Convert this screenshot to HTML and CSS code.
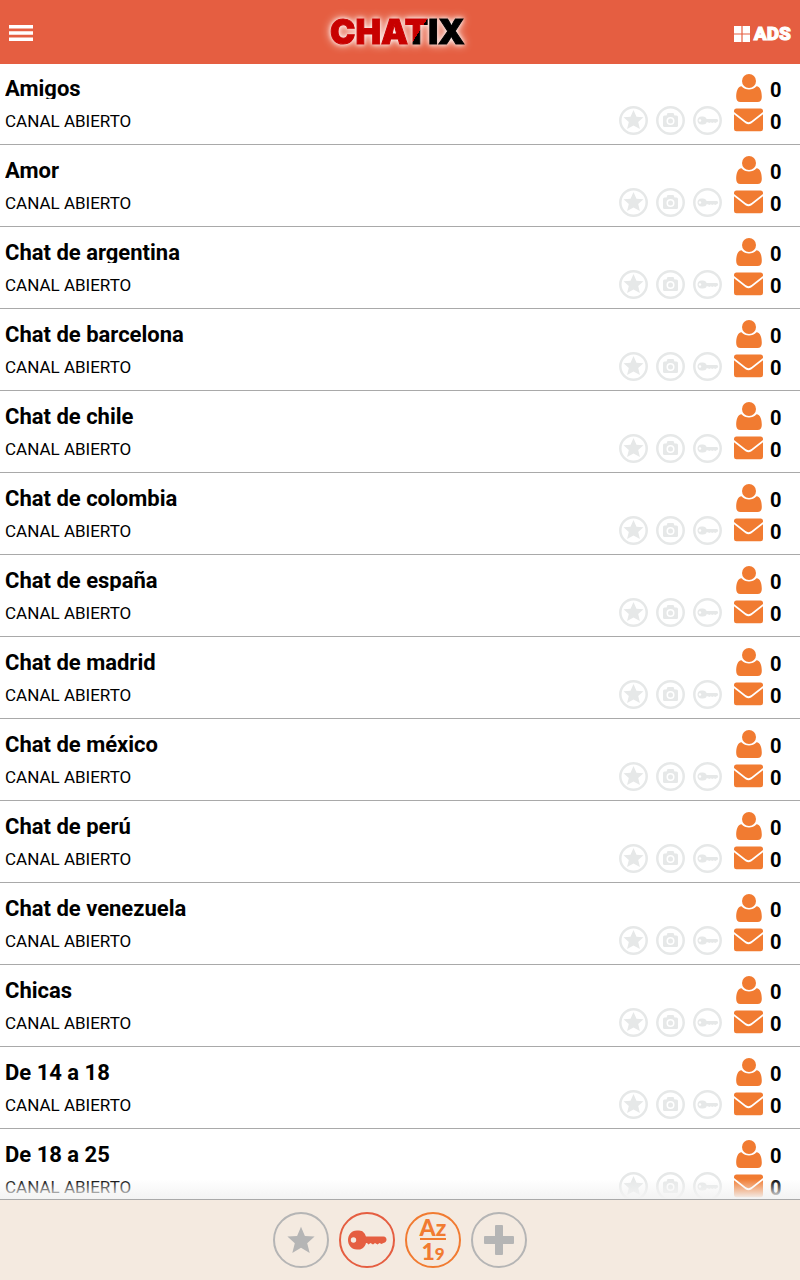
FILE: index.html
```
<!DOCTYPE html>
<html lang="es">
<head>
<meta charset="utf-8">
<meta name="viewport" content="width=device-width, initial-scale=1">
<title>Chatix</title>
<link rel="stylesheet" href="styles.css">
</head>
<body>
<svg class="sprite" aria-hidden="true">
  <symbol id="star" viewBox="0 0 28 28"><path d="M14 .8l3.900 9.200 9.700.6-7.400 6.600 2.500 9.800L14 21.800l-8.700 5.200 2.500-9.800L.4 10.600l9.700-.6z"/></symbol>
  <symbol id="key" viewBox="0 0 40 20"><path fill-rule="evenodd" d="M10 .5h2c4 0 6 3 7 6h17.500c4 0 4 6 0 6.500l-2 1-2-1-2 1.600-2.500-1.600-2 1.600-2.500-1.600-2 1.600L20 13h-1c-1 4-4 6.500-7 6.500h-2c-6 0-9-5-9-9.500S4 .5 10 .5zM6.500 7.300a2.700 2.700 0 1 0 0 5.400 2.700 2.700 0 1 0 0-5.400z"/></symbol>
  <symbol id="b-star" viewBox="0 0 30 30"><circle class="ring" cx="15.500" cy="15.500" r="13.200"/><path d="M15.500 5l3 6.700 7 .5-5.300 4.800 1.700 7-6.400-3.600L9.100 24l1.700-7-5.300-4.800 7-.5z"/></symbol>
  <symbol id="b-cam" viewBox="0 0 30 30"><circle class="ring" cx="15.500" cy="15.500" r="13.200"/><path fill-rule="evenodd" d="M9.500 10.500h2l1-2.500h6l1 2.500h2q1.500 0 1.500 1.500v8.500q0 1.500-1.500 1.500h-12Q8 22 8 20.500V12q0-1.500 1.500-1.500zM15.500 12a4 4 0 1 0 0 8 4 4 0 1 0 0-8z"/><circle cx="15.500" cy="16" r="2.500"/></symbol>
  <symbol id="b-key" viewBox="0 0 30 30"><circle class="ring" cx="15.500" cy="15.500" r="13.200"/><path fill-rule="evenodd" d="M9.500 11.500h1.500c2 0 3 1 3.600 2.500h10c2 0 2 3 0 3.200l-1.300.8-1.500-.8-1.500.9-1.500-.9-1.500.9-1.500-.9h-1.200C14.100 18.500 13 19.500 11 19.500H9.500c-2.700 0-4-2-4-4s1.300-4 4-4zM8 14.200a1.300 1.300 0 1 0 0 2.600 1.300 1.300 0 1 0 0-2.600z"/></symbol>
  <symbol id="user" viewBox="0 0 30 30"><circle cx="15" cy="8" r="7"/><path d="M7.500 13.200c4 4.300 11 4.300 15 0 3.800.5 5.300 5 5.300 10.800q0 5-4.300 5h-17q-4.300 0-4.300-5c0-5.800 1.500-10.300 5.300-10.800z"/></symbol>
  <symbol id="mail" viewBox="0 0 30 24"><path d="M2.500.5h24Q29 .5 29 3v1L17.500 13q-3 2.300-6 0L0 4V3Q0 .500 2.500.5zM0 6.200L11.500 15.200q3 2.300 6 0L29 6.200V21q0 2.300-2.500 2.300h-24Q0 23.300 0 21z"/></symbol>
</svg>

<header class="topbar">
  <button class="menu" aria-label="Menú"><svg viewBox="0 0 24 16" width="24" height="16"><path d="M0 0h24v3.500H0zM0 6.200h24v3.500H0zM0 12.400h24v3.500H0z"/></svg></button>
  <h1 class="logo"><svg class="logo-mark" width="136" height="25">
    <defs><linearGradient id="split" gradientUnits="userSpaceOnUse" x1="65" y1="-4" x2="115" y2="28"><stop offset=".5" stop-color="#c80000"/><stop offset=".5" stop-color="#000"/></linearGradient></defs>
    <text class="logo-text" x="1" y="24" fill="url(#split)" stroke="url(#split)">CHATIX</text>
  </svg></h1>
  <a class="ads" href="#"><svg viewBox="0 0 16 16" width="16" height="16" aria-hidden="true"><path d="M0 0h7.400v7.400H0zM8.600 0H16v7.400H8.600zM0 8.600h7.400V16H0zM8.600 8.600H16V16H8.600z"/></svg>ADS</a>
</header>

<main class="rooms">
  <ul class="list">
    <li class="room"><div class="info"><h2 class="name">Amigos</h2><p class="kind">CANAL ABIERTO</p></div><div class="badges"><svg><use href="#b-star"/></svg><svg><use href="#b-cam"/></svg><svg><use href="#b-key"/></svg></div><div class="counts"><svg class="user"><use href="#user"/></svg><span>0</span><svg class="mail"><use href="#mail"/></svg><span>0</span></div></li>
    <li class="room"><div class="info"><h2 class="name">Amor</h2><p class="kind">CANAL ABIERTO</p></div><div class="badges"><svg><use href="#b-star"/></svg><svg><use href="#b-cam"/></svg><svg><use href="#b-key"/></svg></div><div class="counts"><svg class="user"><use href="#user"/></svg><span>0</span><svg class="mail"><use href="#mail"/></svg><span>0</span></div></li>
    <li class="room"><div class="info"><h2 class="name">Chat de argentina</h2><p class="kind">CANAL ABIERTO</p></div><div class="badges"><svg><use href="#b-star"/></svg><svg><use href="#b-cam"/></svg><svg><use href="#b-key"/></svg></div><div class="counts"><svg class="user"><use href="#user"/></svg><span>0</span><svg class="mail"><use href="#mail"/></svg><span>0</span></div></li>
    <li class="room"><div class="info"><h2 class="name">Chat de barcelona</h2><p class="kind">CANAL ABIERTO</p></div><div class="badges"><svg><use href="#b-star"/></svg><svg><use href="#b-cam"/></svg><svg><use href="#b-key"/></svg></div><div class="counts"><svg class="user"><use href="#user"/></svg><span>0</span><svg class="mail"><use href="#mail"/></svg><span>0</span></div></li>
    <li class="room"><div class="info"><h2 class="name">Chat de chile</h2><p class="kind">CANAL ABIERTO</p></div><div class="badges"><svg><use href="#b-star"/></svg><svg><use href="#b-cam"/></svg><svg><use href="#b-key"/></svg></div><div class="counts"><svg class="user"><use href="#user"/></svg><span>0</span><svg class="mail"><use href="#mail"/></svg><span>0</span></div></li>
    <li class="room"><div class="info"><h2 class="name">Chat de colombia</h2><p class="kind">CANAL ABIERTO</p></div><div class="badges"><svg><use href="#b-star"/></svg><svg><use href="#b-cam"/></svg><svg><use href="#b-key"/></svg></div><div class="counts"><svg class="user"><use href="#user"/></svg><span>0</span><svg class="mail"><use href="#mail"/></svg><span>0</span></div></li>
    <li class="room"><div class="info"><h2 class="name">Chat de españa</h2><p class="kind">CANAL ABIERTO</p></div><div class="badges"><svg><use href="#b-star"/></svg><svg><use href="#b-cam"/></svg><svg><use href="#b-key"/></svg></div><div class="counts"><svg class="user"><use href="#user"/></svg><span>0</span><svg class="mail"><use href="#mail"/></svg><span>0</span></div></li>
    <li class="room"><div class="info"><h2 class="name">Chat de madrid</h2><p class="kind">CANAL ABIERTO</p></div><div class="badges"><svg><use href="#b-star"/></svg><svg><use href="#b-cam"/></svg><svg><use href="#b-key"/></svg></div><div class="counts"><svg class="user"><use href="#user"/></svg><span>0</span><svg class="mail"><use href="#mail"/></svg><span>0</span></div></li>
    <li class="room"><div class="info"><h2 class="name">Chat de méxico</h2><p class="kind">CANAL ABIERTO</p></div><div class="badges"><svg><use href="#b-star"/></svg><svg><use href="#b-cam"/></svg><svg><use href="#b-key"/></svg></div><div class="counts"><svg class="user"><use href="#user"/></svg><span>0</span><svg class="mail"><use href="#mail"/></svg><span>0</span></div></li>
    <li class="room"><div class="info"><h2 class="name">Chat de perú</h2><p class="kind">CANAL ABIERTO</p></div><div class="badges"><svg><use href="#b-star"/></svg><svg><use href="#b-cam"/></svg><svg><use href="#b-key"/></svg></div><div class="counts"><svg class="user"><use href="#user"/></svg><span>0</span><svg class="mail"><use href="#mail"/></svg><span>0</span></div></li>
    <li class="room"><div class="info"><h2 class="name">Chat de venezuela</h2><p class="kind">CANAL ABIERTO</p></div><div class="badges"><svg><use href="#b-star"/></svg><svg><use href="#b-cam"/></svg><svg><use href="#b-key"/></svg></div><div class="counts"><svg class="user"><use href="#user"/></svg><span>0</span><svg class="mail"><use href="#mail"/></svg><span>0</span></div></li>
    <li class="room"><div class="info"><h2 class="name">Chicas</h2><p class="kind">CANAL ABIERTO</p></div><div class="badges"><svg><use href="#b-star"/></svg><svg><use href="#b-cam"/></svg><svg><use href="#b-key"/></svg></div><div class="counts"><svg class="user"><use href="#user"/></svg><span>0</span><svg class="mail"><use href="#mail"/></svg><span>0</span></div></li>
    <li class="room"><div class="info"><h2 class="name">De 14 a 18</h2><p class="kind">CANAL ABIERTO</p></div><div class="badges"><svg><use href="#b-star"/></svg><svg><use href="#b-cam"/></svg><svg><use href="#b-key"/></svg></div><div class="counts"><svg class="user"><use href="#user"/></svg><span>0</span><svg class="mail"><use href="#mail"/></svg><span>0</span></div></li>
    <li class="room"><div class="info"><h2 class="name">De 18 a 25</h2><p class="kind">CANAL ABIERTO</p></div><div class="badges"><svg><use href="#b-star"/></svg><svg><use href="#b-cam"/></svg><svg><use href="#b-key"/></svg></div><div class="counts"><svg class="user"><use href="#user"/></svg><span>0</span><svg class="mail"><use href="#mail"/></svg><span>0</span></div></li>
  </ul>
</main>

<footer class="toolbar">
  <button class="tool" aria-label="Favoritos"><svg width="28" height="28"><use href="#star"/></svg></button>
  <button class="tool tool-key" aria-label="Privados"><svg width="40" height="20"><use href="#key"/></svg></button>
  <button class="tool tool-sort" aria-label="Ordenar"><span class="sort-top">Az</span><span class="sort-bottom">1<small>9</small></span></button>
  <button class="tool" aria-label="Añadir"><svg viewBox="0 0 30 30" width="30" height="30"><path d="M12 0h6q1 0 1 1v10h10q1 0 1 1v6q0 1-1 1H19v10q0 1-1 1h-6q-1 0-1-1V19H1q-1 0-1-1v-6q0-1 1-1h10V1q0-1 1-1z"/></svg></button>
</footer>
</body>
</html>
```
FILE: styles.css
```
* {
  box-sizing: border-box;
  margin: 0;
  padding: 0;
}

body {
  display: flex;
  flex-direction: column;
  height: 100vh;
  background: #fff;
  color: #000;
  font-family: Roboto, "Liberation Sans", sans-serif;
}

svg {
  display: block;
  fill: currentColor;
}

button {
  border: 0;
  background: none;
  color: inherit;
  font: inherit;
  cursor: pointer;
}

.sprite {
  position: absolute;
  width: 0;
  height: 0;
}

.topbar {
  flex: none;
  display: grid;
  grid-template-columns: 1fr auto 1fr;
  align-items: center;
  height: 64px;
  padding: 0 9px;
  background: #e55e41;
  color: #fff;
}

.menu {
  justify-self: start;
  padding-top: 2px;
}

.logo {
  padding-right: 6px;
  filter: drop-shadow(0 0 2px #fff) drop-shadow(0 0 4px rgba(255, 255, 255, 0.7));
}

.logo-mark {
  overflow: visible;
}

.logo-text {
  font: 900 34px Inter, sans-serif;
  stroke-width: 1px;
}

.ads {
  justify-self: end;
  display: flex;
  align-items: center;
  gap: 4px;
  padding-top: 3px;
  color: #fff;
  font: 900 19px/24px Roboto, "Liberation Sans", sans-serif;
  -webkit-text-stroke: 1px #fff;
  text-decoration: none;
}

.rooms {
  position: relative;
  flex: 1;
  min-height: 0;
  overflow: hidden;
}

.rooms::after {
  content: "";
  position: absolute;
  inset: auto 0 0;
  height: 20px;
  background: linear-gradient(rgba(243, 243, 243, 0), #f3f3f3);
}

.list {
  list-style: none;
}

.room {
  display: flex;
  height: 82px;
  padding: 10px 8px 0 5px;
  border-bottom: 1px solid #a9a9a9;
}

.room:first-child {
  height: 81px;
  padding-top: 9px;
}

.info {
  flex: 1;
}

.name {
  height: 26px;
  overflow: hidden;
  font-size: 22px;
  font-weight: 700;
  line-height: 32px;
}

.kind {
  padding-top: 12px;
  font-size: 17px;
  font-weight: 400;
  line-height: 20px;
}

.badges {
  display: flex;
  gap: 7px;
  padding-top: 32px;
  color: #e6e8e8;
}

.badges svg {
  width: 30px;
  height: 30px;
}

.ring {
  fill: none;
  stroke: currentColor;
  stroke-width: 2.500;
}

.counts {
  display: grid;
  grid-template-columns: 30px 22px;
  grid-template-rows: 32px 32px;
  column-gap: 6px;
  margin-left: 12px;
  color: #f17b31;
}

.counts span {
  color: #000;
  font-size: 20px;
  font-weight: 700;
  line-height: 34px;
}

.user {
  width: 30px;
  height: 30px;
}

.mail {
  width: 30px;
  height: 24px;
  margin-top: 3px;
}

.toolbar {
  flex: none;
  display: flex;
  justify-content: center;
  align-items: center;
  gap: 10px;
  height: 81px;
  border-top: 1px solid #a9a9a9;
  background: #f4eae0;
}

.tool {
  display: flex;
  flex-direction: column;
  align-items: center;
  justify-content: center;
  width: 56px;
  height: 56px;
  border: 2px solid currentColor;
  border-radius: 50%;
  color: #b5b5b5;
}

.tool-key {
  color: #e55e41;
}

.tool-sort {
  color: #f17b31;
  font: 900 23px/22px Lato, "Noto Sans", sans-serif;
}

.sort-top {
  border-bottom: 2px solid currentColor;
}

.sort-bottom small {
  font-size: 17px;
}
```
